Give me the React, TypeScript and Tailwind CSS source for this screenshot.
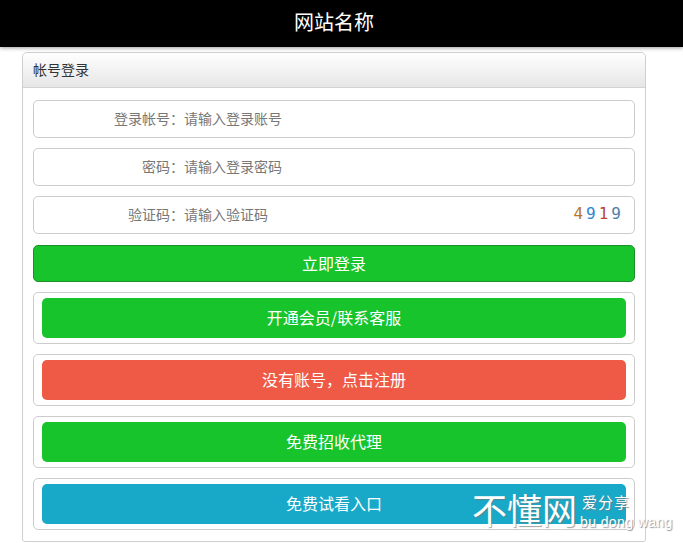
const fields = [
  { label: "登录帐号：", placeholder: "请输入登录账号" },
  { label: "密码：", placeholder: "请输入登录密码" },
  { label: "验证码：", placeholder: "请输入验证码", code: true },
];

const links = [
  { text: "开通会员/联系客服", color: "bg-[#17c42b]" },
  { text: "没有账号，点击注册", color: "bg-[#ee5a45]" },
  { text: "免费招收代理", color: "bg-[#17c42b]" },
  { text: "免费试看入口", color: "bg-[#18a9c9]" },
];

export default function App() {
  return (
    <div className="relative h-[543px] w-[683px] overflow-hidden bg-white font-['Noto_Sans_CJK_SC',sans-serif] text-[14px]">
      <header className="h-[47px] bg-black pr-[15px] pt-[7px] text-center text-[20px] leading-[30px] text-white shadow-[0_1px_4px_rgba(0,0,0,0.4)]">
        网站名称
      </header>

      <section className="ml-[22px] mt-[5px] h-[490px] w-[624px] rounded-t-[5px] rounded-b-[3px] border border-[#cfcfcf] bg-white">
        <div className="h-[35px] rounded-t-[5px] border-b border-[#d4d4d4] bg-gradient-to-b from-white to-[#e6e6e6] px-[10px] pt-[5px] leading-[22px] text-[#333]">
          帐号登录
        </div>

        <div className="flex flex-col px-[10px] pt-[12px]">
          <div className="flex flex-col gap-[10px]">
            {fields.map((field) => (
              <div
                key={field.label}
                className="flex h-[38px] items-center rounded-[5px] border border-[#cccccc] bg-white pb-[2px] text-[#777]"
              >
                <span className="w-[150px] text-right">{field.label}</span>
                <span>{field.placeholder}</span>
                {field.code && (
                  <span className="ml-auto mr-[13px] flex gap-[3px] font-['DejaVu_Sans_Mono',monospace] text-[16px] leading-none">
                    <span className="text-[#b8762a]">4</span>
                    <span className="text-[#2f86d0]">9</span>
                    <span className="text-[#b8453a]">1</span>
                    <span className="text-[#4f7fa8]">9</span>
                  </span>
                )}
              </div>
            ))}
          </div>

          <button className="mt-[11px] flex h-[37px] items-center justify-center rounded-[5px] border border-[#1d8f2a] bg-[#17c42b] pb-[2px] text-[16px] text-white">
            立即登录
          </button>

          <div className="mt-[10px] flex flex-col gap-[10px]">
            {links.map((link) => (
              <div key={link.text} className="h-[52px] rounded-[5px] border border-[#cccccc] px-[8px] pt-[5px]">
                <a className={`flex h-[40px] items-center justify-center rounded-[5px] pb-[2px] text-[16px] text-white ${link.color}`}>
                  {link.text}
                </a>
              </div>
            ))}
          </div>
        </div>
      </section>

      {/* watermark over the last row */}
      <div className="absolute left-[472px] top-[488px] flex items-start text-white">
        <span className="text-[35px] leading-[42px] [text-shadow:1px_1px_1px_rgba(120,120,120,0.7)]">不懂网</span>
        <div className="ml-[3px] flex flex-col pt-[5px]">
          <span className="pl-[2px] text-[15px] leading-[18px] tracking-[1px] [text-shadow:1px_1px_1px_rgba(120,120,120,0.7)]">爱分享</span>
          <span className="whitespace-nowrap pt-[1px] font-['Liberation_Sans',sans-serif] text-[14px] leading-[20px] tracking-[0.4px] [text-shadow:1px_1px_1px_rgba(120,120,120,0.8)]">
            bu dong wang
          </span>
        </div>
      </div>
    </div>
  );
}
